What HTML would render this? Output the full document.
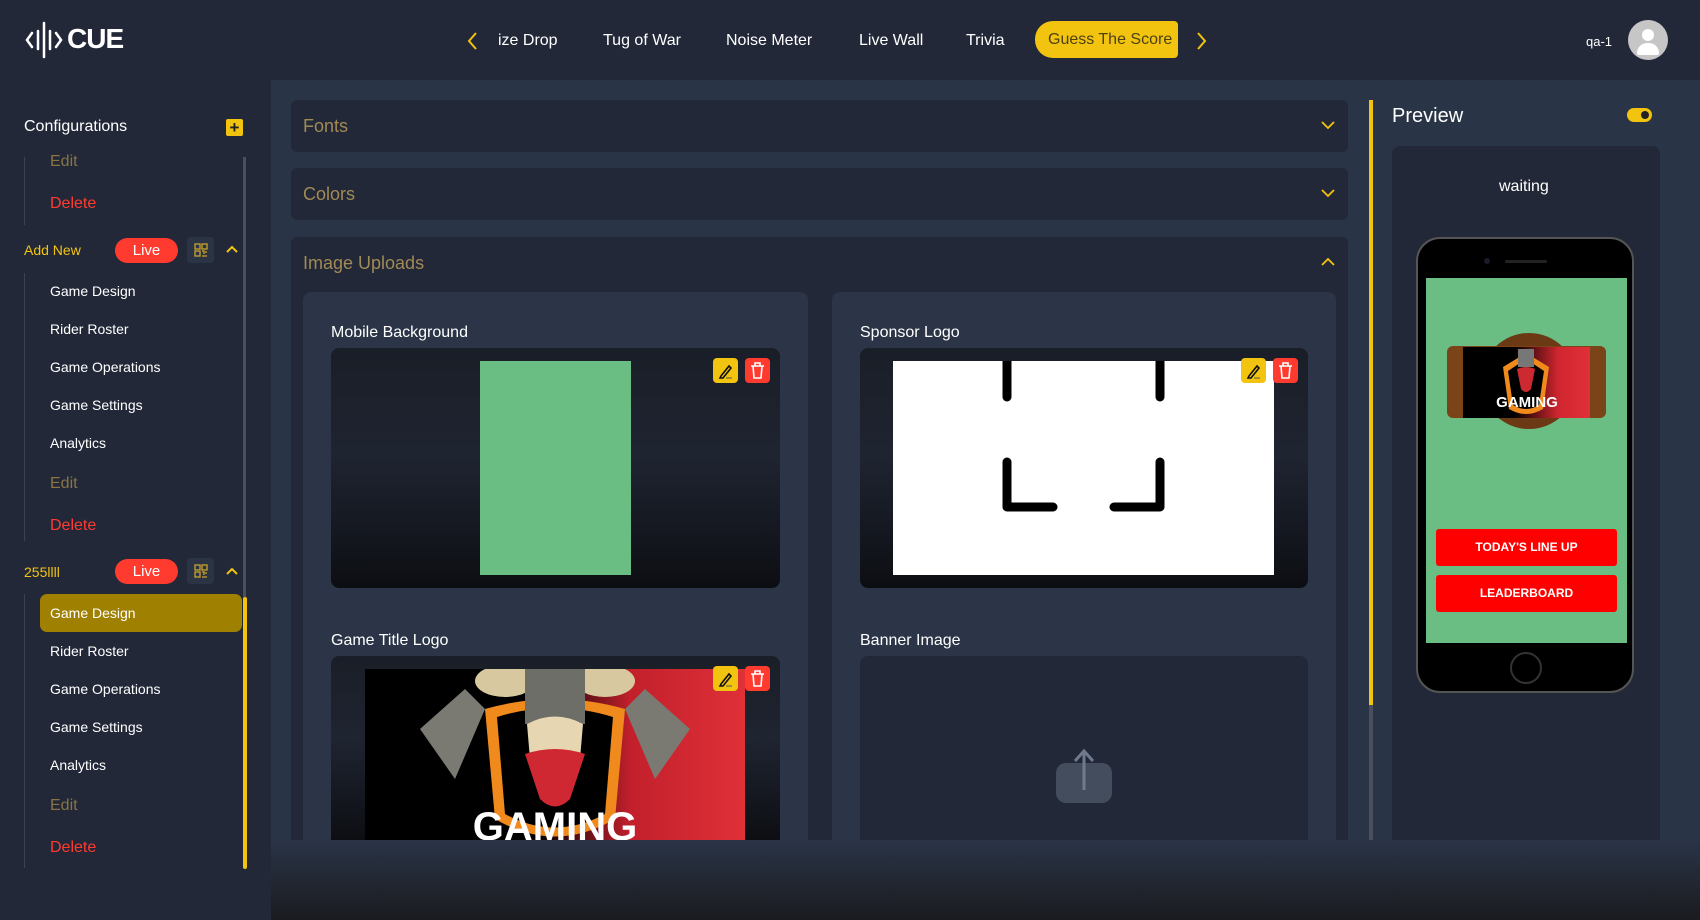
<!DOCTYPE html>
<html><head><meta charset="utf-8">
<style>
*{box-sizing:border-box;margin:0;padding:0}
body{width:1700px;height:920px;overflow:hidden;background:#222838;font-family:"Liberation Sans",sans-serif;color:#fff;position:relative}
.a{position:absolute}
.t{position:absolute;white-space:nowrap}
.nav{font-size:16px;top:32px;color:#fff}
.side{font-size:14px;color:#fff}
.edit{font-size:16px;color:#8a7444}
.del{font-size:16px;color:#ff3b30}
.live{position:absolute;width:63px;height:25px;border-radius:13px;background:#ff3b30;color:#fff;font-size:15px;text-align:center;line-height:25px}
.qr{position:absolute;width:27px;height:26px;border-radius:4px;background:#2b3445}
.panel{position:absolute;left:291px;width:1057px;background:#222838;border-radius:6px}
.ph{font-size:18px;color:#a08a55;position:absolute;left:12px}
.card{position:absolute;background:#2b3547;border-radius:8px}
.lbl{position:absolute;font-size:16px;color:#fff}
.box{position:absolute;border-radius:8px;background:linear-gradient(#1a1e27 0%,#1f2431 45%,#0c0e12 100%);overflow:hidden}
.btn{position:absolute;width:25px;height:25px;border-radius:4px}
</style></head><body>
<!-- header -->
<svg class="a" style="left:24px;top:21px" width="40" height="38" viewBox="0 0 40 38"><g stroke="#fff" stroke-width="2.5" fill="none" stroke-linecap="round"><path d="M8 12 L3 19 L8 26"/><path d="M14 10 V28"/><path d="M20 2 V36"/><path d="M26 10 V28"/><path d="M32 12 L37 19 L32 26"/></g></svg>
<div class="t" style="left:67px;top:23px;font-size:28px;font-weight:bold;letter-spacing:-1px">CUE</div>
<svg class="a" style="left:466px;top:31px" width="12" height="20"><path d="M10 2 L3 10 L10 18" stroke="#f0c30f" stroke-width="2" fill="none"/></svg>
<div class="t nav" style="left:498px">ize Drop</div>
<div class="t nav" style="left:603px">Tug of War</div>
<div class="t nav" style="left:726px">Noise Meter</div>
<div class="t nav" style="left:859px">Live Wall</div>
<div class="t nav" style="left:966px">Trivia</div>
<div class="a" style="left:1035px;top:21px;width:143px;height:37px;background:#f2c40f;border-radius:18px 4px 4px 18px;overflow:hidden"><div class="t" style="left:13px;top:10px;font-size:16px;color:#4d4114">Guess The Score</div></div>
<svg class="a" style="left:1196px;top:31px" width="12" height="20"><path d="M2 2 L9 10 L2 18" stroke="#f0c30f" stroke-width="2" fill="none"/></svg>
<div class="t" style="left:1586px;top:34px;font-size:13px">qa-1</div>
<div class="a" style="left:1628px;top:20px;width:40px;height:40px;border-radius:50%;background:#c6c6c6;overflow:hidden"><div class="a" style="left:14px;top:9px;width:12px;height:12px;border-radius:50%;background:#fff"></div><div class="a" style="left:9px;top:23px;width:22px;height:12px;border-radius:11px 11px 2px 2px;background:#fff"></div></div>

<!-- sidebar -->
<div class="t" style="left:24px;top:118px;font-size:16px">Configurations</div>
<div class="a" style="left:226px;top:119px;width:17px;height:17px;background:#f2c40f;border-radius:2px;color:#222;font-size:17px;font-weight:bold;text-align:center;line-height:17px">+</div>
<div class="a" style="left:243px;top:157px;width:3px;height:440px;background:#4a4f5a"></div>
<div class="a" style="left:243px;top:597px;width:4px;height:272px;background:#f2c40f;border-radius:2px"></div>
<div class="a" style="left:24px;top:157px;width:1px;height:68px;background:#3a4254"></div>
<div class="a" style="left:24px;top:273px;width:1px;height:268px;background:#3a4254"></div>
<div class="a" style="left:24px;top:594px;width:1px;height:274px;background:#3a4254"></div>
<div class="t edit" style="left:50px;top:153px">Edit</div>
<div class="t del" style="left:50px;top:195px">Delete</div>

<div class="t" style="left:24px;top:242px;font-size:14px;color:#f2c40f">Add New</div>
<div class="live" style="left:115px;top:238px">Live</div>
<div class="qr" style="left:187px;top:237px"></div>
<svg class="a" style="left:194px;top:243px" width="14" height="14"><g stroke="#c9a22a" stroke-width="1.3" fill="none"><rect x="1" y="1" width="5" height="5"/><rect x="8" y="1" width="5" height="5"/><rect x="1" y="8" width="5" height="5"/><path d="M8 8h2v3M12 8v2M8 13h5"/></g></svg>
<svg class="a" style="left:225px;top:244px" width="14" height="10"><path d="M2 8 L7 3 L12 8" stroke="#f2c40f" stroke-width="2" fill="none"/></svg>
<div class="t side" style="left:50px;top:283px">Game Design</div>
<div class="t side" style="left:50px;top:321px">Rider Roster</div>
<div class="t side" style="left:50px;top:359px">Game Operations</div>
<div class="t side" style="left:50px;top:397px">Game Settings</div>
<div class="t side" style="left:50px;top:435px">Analytics</div>
<div class="t edit" style="left:50px;top:475px">Edit</div>
<div class="t del" style="left:50px;top:517px">Delete</div>

<div class="t" style="left:24px;top:564px;font-size:14px;color:#f2c40f">255llll</div>
<div class="live" style="left:115px;top:559px">Live</div>
<div class="qr" style="left:187px;top:558px"></div>
<svg class="a" style="left:194px;top:564px" width="14" height="14"><g stroke="#c9a22a" stroke-width="1.3" fill="none"><rect x="1" y="1" width="5" height="5"/><rect x="8" y="1" width="5" height="5"/><rect x="1" y="8" width="5" height="5"/><path d="M8 8h2v3M12 8v2M8 13h5"/></g></svg>
<svg class="a" style="left:225px;top:566px" width="14" height="10"><path d="M2 8 L7 3 L12 8" stroke="#f2c40f" stroke-width="2" fill="none"/></svg>
<div class="a" style="left:40px;top:594px;width:202px;height:38px;background:#9f8000;border-radius:7px"></div>
<div class="t side" style="left:50px;top:605px">Game Design</div>
<div class="t side" style="left:50px;top:643px">Rider Roster</div>
<div class="t side" style="left:50px;top:681px">Game Operations</div>
<div class="t side" style="left:50px;top:719px">Game Settings</div>
<div class="t side" style="left:50px;top:757px">Analytics</div>
<div class="t edit" style="left:50px;top:797px">Edit</div>
<div class="t del" style="left:50px;top:839px">Delete</div>

<!-- main -->
<div class="a" style="left:271px;top:80px;width:1429px;height:840px;background:linear-gradient(#2a3447 0px,#2a3447 820px,#1b1d22 840px)"></div>
<div class="a" style="left:271px;top:840px;width:1429px;height:80px;background:linear-gradient(#2a3447,#1a1b1f)"></div>

<div class="panel" style="top:100px;height:52px"><div class="ph" style="top:16px">Fonts</div>
<svg class="a" style="right:12px;top:20px" width="16" height="10"><path d="M2 2 L8 8 L14 2" stroke="#f2c40f" stroke-width="1.8" fill="none"/></svg></div>
<div class="panel" style="top:168px;height:52px"><div class="ph" style="top:16px">Colors</div>
<svg class="a" style="right:12px;top:20px" width="16" height="10"><path d="M2 2 L8 8 L14 2" stroke="#f2c40f" stroke-width="1.8" fill="none"/></svg></div>
<div class="panel" style="top:237px;height:603px;border-radius:6px 6px 0 0"><div class="ph" style="top:16px">Image Uploads</div>
<svg class="a" style="right:12px;top:20px" width="16" height="10"><path d="M2 8 L8 2 L14 8" stroke="#f2c40f" stroke-width="1.8" fill="none"/></svg></div>

<div class="card" style="left:303px;top:292px;width:505px;height:548px;border-radius:8px 8px 0 0"></div>
<div class="card" style="left:832px;top:292px;width:504px;height:548px;border-radius:8px 8px 0 0"></div>

<div class="lbl" style="left:331px;top:324px">Mobile Background</div>
<div class="box" style="left:331px;top:348px;width:449px;height:240px"><div class="a" style="left:149px;top:13px;width:151px;height:214px;background:#6abe83"></div></div>

<div class="lbl" style="left:860px;top:324px">Sponsor Logo</div>
<div class="box" style="left:860px;top:348px;width:448px;height:240px"><div class="a" style="left:33px;top:13px;width:381px;height:214px;background:#fff">
<svg class="a" style="left:0;top:0" width="381" height="214"><g stroke="#000" stroke-width="9" fill="none" stroke-linecap="round" stroke-linejoin="round"><path d="M114 0 V36"/><path d="M267 0 V36"/><path d="M114 101 V146 H160"/><path d="M267 101 V146 H221"/></g></svg></div></div>

<div class="lbl" style="left:331px;top:632px">Game Title Logo</div>
<div class="box" style="left:331px;top:656px;width:449px;height:184px;border-radius:8px 8px 0 0"><div class="a" style="left:34px;top:13px;width:380px;height:171px;background:linear-gradient(90deg,#000 0%,#000 45%,#c2202c 70%,#e03038 100%);overflow:hidden">
<svg class="a" style="left:0;top:0" width="380" height="171" viewBox="0 0 380 171">
<path d="M55 60 L100 20 L120 40 L90 110 Z" fill="#7a7a72"/><path d="M325 60 L280 20 L260 40 L290 110 Z" fill="#7a7a72"/>
<path d="M120 40 Q190 20 260 40 L250 150 Q190 185 130 150 Z" fill="#f08a1c"/>
<path d="M132 48 Q190 30 248 48 L240 145 Q190 172 140 145 Z" fill="#000"/>
<ellipse cx="140" cy="12" rx="30" ry="16" fill="#d8c8a0"/><ellipse cx="240" cy="12" rx="30" ry="16" fill="#d8c8a0"/>
<rect x="160" y="0" width="60" height="55" fill="#6e6e68"/>
<path d="M162 55 Q190 40 218 55 L215 90 Q190 100 165 90 Z" fill="#e6d6b2"/>
<path d="M160 85 Q190 75 220 85 L205 130 Q190 145 175 130 Z" fill="#d02832"/>
<text x="190" y="171" font-family="Liberation Sans" font-weight="bold" font-size="40" fill="#fff" text-anchor="middle">GAMING</text></svg></div></div>

<div class="lbl" style="left:860px;top:632px">Banner Image</div>
<div class="a" style="left:860px;top:656px;width:448px;height:184px;background:#222838;border-radius:8px 8px 0 0">
<div class="a" style="left:196px;top:107px;width:56px;height:40px;border-radius:10px;background:#444d5e"></div>
<svg class="a" style="left:210px;top:92px" width="28" height="44"><path d="M14 42 V4 M5 13 L14 3 L23 13" stroke="#6f7a8e" stroke-width="3" fill="none"/></svg></div>

<!-- edit/delete buttons -->
<div class="btn" style="left:713px;top:358px;background:#f2c40f"></div><div class="btn" style="left:745px;top:358px;background:#ff3b30"></div>
<div class="btn" style="left:1241px;top:358px;background:#f2c40f"></div><div class="btn" style="left:1273px;top:358px;background:#ff3b30"></div>
<div class="btn" style="left:713px;top:666px;background:#f2c40f"></div><div class="btn" style="left:745px;top:666px;background:#ff3b30"></div>
<svg class="a" style="left:713px;top:358px" width="25" height="25"><path d="M8 18 L16 8 L18 10 L10 20 L7 20 Z" stroke="#111" stroke-width="1.6" fill="none"/><path d="M13 20 H19" stroke="#555" stroke-width="1"/></svg>
<svg class="a" style="left:1241px;top:358px" width="25" height="25"><path d="M8 18 L16 8 L18 10 L10 20 L7 20 Z" stroke="#111" stroke-width="1.6" fill="none"/><path d="M13 20 H19" stroke="#555" stroke-width="1"/></svg>
<svg class="a" style="left:713px;top:666px" width="25" height="25"><path d="M8 18 L16 8 L18 10 L10 20 L7 20 Z" stroke="#111" stroke-width="1.6" fill="none"/><path d="M13 20 H19" stroke="#555" stroke-width="1"/></svg>
<svg class="a" style="left:745px;top:358px" width="25" height="25"><g stroke="#fff" stroke-width="1.6" fill="none"><path d="M6 8 H19 M10 8 V5 H15 V8 M8 8 L9 20 H16 L17 8"/></g></svg>
<svg class="a" style="left:1273px;top:358px" width="25" height="25"><g stroke="#fff" stroke-width="1.6" fill="none"><path d="M6 8 H19 M10 8 V5 H15 V8 M8 8 L9 20 H16 L17 8"/></g></svg>
<svg class="a" style="left:745px;top:666px" width="25" height="25"><g stroke="#fff" stroke-width="1.6" fill="none"><path d="M6 8 H19 M10 8 V5 H15 V8 M8 8 L9 20 H16 L17 8"/></g></svg>

<!-- preview -->
<div class="a" style="left:1369px;top:100px;width:4px;height:605px;background:#f2c40f"></div>
<div class="a" style="left:1369px;top:705px;width:4px;height:135px;background:#4a4f5a"></div>
<div class="t" style="left:1392px;top:105px;font-size:20px">Preview</div>
<div class="a" style="left:1627px;top:108px;width:25px;height:14px;border-radius:7px;background:#f2c40f"><div class="a" style="left:14px;top:3px;width:8px;height:8px;border-radius:50%;background:#222"></div></div>
<div class="a" style="left:1392px;top:146px;width:268px;height:694px;background:#222838;border-radius:8px 8px 0 0"></div>
<div class="t" style="left:1499px;top:178px;font-size:16px">waiting</div>
<div class="a" style="left:1416px;top:237px;width:218px;height:456px;background:#000;border-radius:24px;border:2px solid #555"></div>
<div class="a" style="left:1505px;top:260px;width:42px;height:3px;background:#222;border-radius:2px"></div>
<div class="a" style="left:1484px;top:258px;width:6px;height:6px;background:#1a1a2a;border-radius:50%"></div>
<div class="a" style="left:1426px;top:278px;width:201px;height:365px;background:#6abe83"></div>
<div class="a" style="left:1510px;top:652px;width:32px;height:32px;border-radius:50%;border:2px solid #333"></div>
<!-- preview logo -->
<div class="a" style="left:1481px;top:333px;width:96px;height:96px;border-radius:50%;background:#6b3a14"></div>
<div class="a" style="left:1447px;top:346px;width:159px;height:72px;background:#7a4418;border-radius:6px"></div>
<div class="a" style="left:1463px;top:347px;width:127px;height:71px;background:linear-gradient(90deg,#000 0%,#000 40%,#d0262f 75%,#e03038 100%)"></div>
<svg class="a" style="left:1463px;top:347px" width="127" height="71"><path d="M40 20 L63 6 L86 20 L80 62 Q63 72 46 62 Z" fill="#f08a1c"/><path d="M45 24 L63 12 L81 24 L76 58 Q63 66 50 58 Z" fill="#000"/><rect x="55" y="2" width="16" height="18" fill="#777"/><path d="M54 22 Q63 18 72 22 L68 42 Q63 48 58 42 Z" fill="#cc2a30"/><text x="64" y="60" font-family="Liberation Sans" font-weight="bold" font-size="15" fill="#fff" text-anchor="middle">GAMING</text></svg>
<div class="a" style="left:1436px;top:529px;width:181px;height:37px;background:#ff0000;border-radius:3px;font-size:12px;font-weight:bold;text-align:center;line-height:37px">TODAY'S LINE UP</div>
<div class="a" style="left:1436px;top:575px;width:181px;height:37px;background:#ff0000;border-radius:3px;font-size:12px;font-weight:bold;text-align:center;line-height:37px">LEADERBOARD</div>
</body></html>
